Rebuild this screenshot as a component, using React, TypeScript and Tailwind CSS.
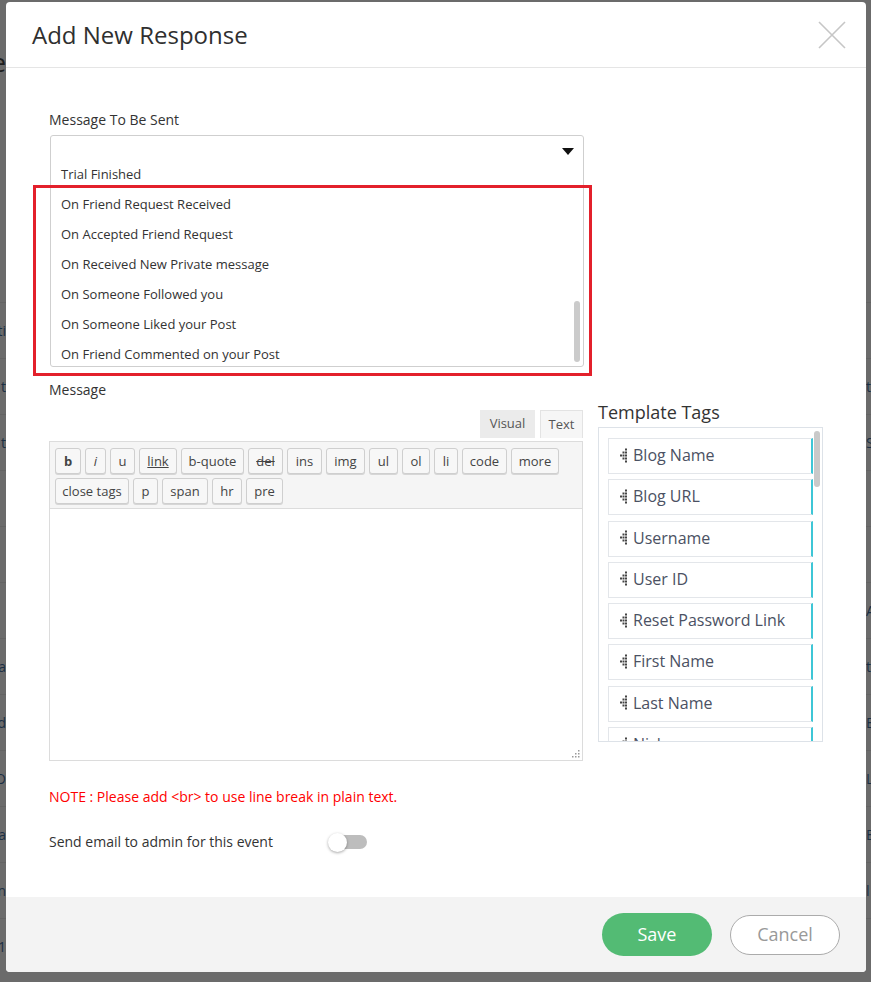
import React from "react";

const options = [
  "Trial Finished",
  "On Friend Request Received",
  "On Accepted Friend Request",
  "On Received New Private message",
  "On Someone Followed you",
  "On Someone Liked your Post",
  "On Friend Commented on your Post",
];

const tags = [
  "Blog Name",
  "Blog URL",
  "Username",
  "User ID",
  "Reset Password Link",
  "First Name",
  "Last Name",
  "Nickname",
];

type Btn = { t: string; w: string; c?: string };
const row1: Btn[] = [
  { t: "b", w: "w-[26px]", c: "font-bold" },
  { t: "i", w: "w-[21px]", c: "italic" },
  { t: "u", w: "w-[25px]" },
  { t: "link", w: "w-[38px]", c: "underline" },
  { t: "b-quote", w: "w-[63px]" },
  { t: "del", w: "w-[35px]", c: "line-through" },
  { t: "ins", w: "w-[35px]" },
  { t: "img", w: "w-[39px]" },
  { t: "ul", w: "w-[29px]" },
  { t: "ol", w: "w-[28px]" },
  { t: "li", w: "w-[24px]" },
  { t: "code", w: "w-[45px]" },
  { t: "more", w: "w-[48px]" },
];
const row2: Btn[] = [
  { t: "close tags", w: "w-[74px]" },
  { t: "p", w: "w-[25px]" },
  { t: "span", w: "w-[46px]" },
  { t: "hr", w: "w-[30px]" },
  { t: "pre", w: "w-[37px]" },
];

const leftFrags = ["ti", "t", "t", "", "", "", "ca", "d", "O", "ca", "n", "1"];
const rightFrags = ["", "t", "S", "", "", "A", "t", "E", "L", "E", "l", ""];

function Grip() {
  const dots: [number, number][] = [];
  [0, 3, 6, 9, 12].forEach((y) => dots.push([5, y]));
  [3, 6, 9].forEach((y) => dots.push([2.5, y]));
  dots.push([0, 6]);
  return (
    <svg width="7" height="15" viewBox="0 0 7 15" className="shrink-0">
      {dots.map(([x, y], i) => (
        <rect key={i} x={x} y={y + 0.5} width="2" height="2" fill="#444" />
      ))}
    </svg>
  );
}

function ToolBtn({ b }: { b: Btn }) {
  return (
    <span
      className={`${b.w} h-[26px] shrink-0 flex items-center justify-center border border-[#cfcfcf] rounded-[3px] bg-[#f7f7f7] shadow-[0_1px_0_#d6d6d6] text-[13px] text-[#444] leading-none ${b.c ?? ""}`}
    >
      {b.t}
    </span>
  );
}

export default function App() {
  return (
    <div className="relative w-[871px] h-[982px] overflow-hidden bg-[#6b6b6b] font-['Open_Sans','Noto_Sans',sans-serif]">
      {/* underlying page (dimmed) */}
      <div className="flex flex-col w-full h-full">
        <div className="h-[40px]" />
        <div className="h-[44px] flex justify-between items-center">
          <div className="w-[6px] overflow-hidden flex justify-end whitespace-nowrap text-[26px] text-[#1e1e1e]">Re</div>
        </div>
        <div className="h-[218px]" />
        {leftFrags.map((f, i) => (
          <div key={i} className="h-[56px] flex justify-between items-center border-t border-[#636363] text-[14px]">
            <div className="w-[6px] overflow-hidden flex justify-end whitespace-nowrap text-[#1b2f44]">{f}</div>
            <div className="w-[5px] overflow-hidden flex justify-start whitespace-nowrap text-[#1b2f44]">{rightFrags[i]}</div>
          </div>
        ))}
      </div>

      {/* modal */}
      <div className="absolute left-[6px] top-[2px] w-[860px] h-[970px] bg-white rounded-[4px] flex flex-col">
        <div className="h-[66px] shrink-0 border-b border-[#e5e5e5] flex items-center justify-between pl-[26px] pr-[20px]">
          <h2 className="text-[24px] text-[#2f2f2f] leading-none pt-[1px]">Add New Response</h2>
          <svg width="28" height="28" viewBox="0 0 28 28" className="mt-[1px]">
            <path d="M1 1L27 27M27 1L1 27" stroke="#c6c6c6" strokeWidth="1.6" />
          </svg>
        </div>

        <div className="flex-1 flex flex-col pl-[43px] pt-[42px]">
          <div className="text-[14px] leading-[20px] text-[#333]">Message To Be Sent</div>
          <div className="relative mt-[5px] ml-[1px] w-[534px] h-[232px] border border-[#cfcfcf] rounded-[3px] overflow-hidden bg-white">
            <div className="h-[24px] flex items-end justify-end pr-[9px] pb-[5px]">
              <svg width="12" height="7" viewBox="0 0 12 7">
                <path d="M0 0H12L6 7Z" fill="#111" />
              </svg>
            </div>
            {options.map((o) => (
              <div key={o} className="h-[30px] flex items-center pl-[10px] text-[13px] text-[#333]">
                {o}
              </div>
            ))}
            <div className="absolute right-[3px] bottom-[4px] w-[6px] h-[61px] rounded-full bg-[#cbcbcb]" />
          </div>

          <div className="flex items-start">
            <div className="w-[534px] flex flex-col">
              <div className="mt-[13px] text-[14px] leading-[20px] text-[#333]">Message</div>
              <div className="mt-[10px] flex justify-end gap-[5px]">
                <span className="h-[28px] w-[55px] flex items-center justify-center bg-[#ebebeb] text-[13px] text-[#555]">Visual</span>
                <span className="h-[28px] w-[43px] flex items-center justify-center bg-[#f6f6f6] border border-b-0 border-[#e3e3e3] text-[13px] text-[#555]">Text</span>
              </div>
              <div className="mt-[3px] border border-[#dcdcdc] flex flex-col">
                <div className="bg-[#f5f5f5] border-b border-[#dcdcdc] px-[5px] pt-[6px] pb-[4px] flex flex-col gap-[4px]">
                  <div className="flex gap-[4px]">
                    {row1.map((b) => (
                      <ToolBtn key={b.t} b={b} />
                    ))}
                  </div>
                  <div className="flex gap-[4px]">
                    {row2.map((b) => (
                      <ToolBtn key={b.t} b={b} />
                    ))}
                  </div>
                </div>
                <div className="relative h-[251px] bg-white">
                  <svg width="8" height="8" viewBox="0 0 8 8" className="absolute right-[2px] bottom-[2px]">
                    {[
                      [6, 0],
                      [3, 3],
                      [6, 3],
                      [0, 6],
                      [3, 6],
                      [6, 6],
                    ].map(([x, y], i) => (
                      <rect key={i} x={x} y={y} width="1.5" height="1.5" fill="#9a9a9a" />
                    ))}
                  </svg>
                </div>
              </div>
            </div>

            <div className="ml-[15px] w-[225px] flex flex-col">
              <div className="mt-[33px] text-[18px] leading-[24px] text-[#333]">Template Tags</div>
              <div className="relative mt-[3px] h-[315px] border border-[#dde2e8] overflow-hidden pt-[10px] pl-[9px] flex flex-col gap-[5.3px]">
                {tags.map((t) => (
                  <div
                    key={t}
                    className="shrink-0 w-[205px] h-[36px] flex items-center gap-[6px] pl-[11px] pb-[2px] border border-r-2 border-[#e3e6ea] border-r-[#3ec6d6] text-[16px] text-[#4b5163]"
                  >
                    <Grip />
                    <span>{t}</span>
                  </div>
                ))}
                <div className="absolute right-[2px] top-[3px] w-[6px] h-[56px] rounded-full bg-[#c9c9c9]" />
              </div>
            </div>
          </div>

          <div className="mt-[26px] text-[14px] leading-[20px] text-[#ff0000]">
            NOTE : Please add &lt;br&gt; to use line break in plain text.
          </div>

          <div className="mt-[25px] flex items-center">
            <span className="w-[279px] text-[14px] leading-[20px] text-[#333]">Send email to admin for this event</span>
            <div className="relative w-[39px] h-[20px] flex items-center">
              <div className="ml-[8px] w-[31px] h-[14px] rounded-full bg-[#bdbdbd]" />
              <div className="absolute left-0 top-[1px] w-[19px] h-[19px] rounded-full bg-white shadow-[0_1px_3px_rgba(0,0,0,0.35)]" />
            </div>
          </div>
        </div>

        <div className="h-[75px] shrink-0 bg-[#f3f3f3] rounded-b-[4px] flex items-center justify-end pr-[26px] gap-[18px]">
          <button className="w-[110px] h-[43px] rounded-full bg-[#53bb74] text-white text-[18px]">Save</button>
          <button className="w-[110px] h-[40px] rounded-full bg-white border border-[#ababab] text-[#999] text-[18px]">Cancel</button>
        </div>

        {/* annotation */}
        <div className="absolute left-[27px] top-[183px] w-[559px] h-[191px] border-[3px] border-[#e3202b] pointer-events-none" />
      </div>
    </div>
  );
}
